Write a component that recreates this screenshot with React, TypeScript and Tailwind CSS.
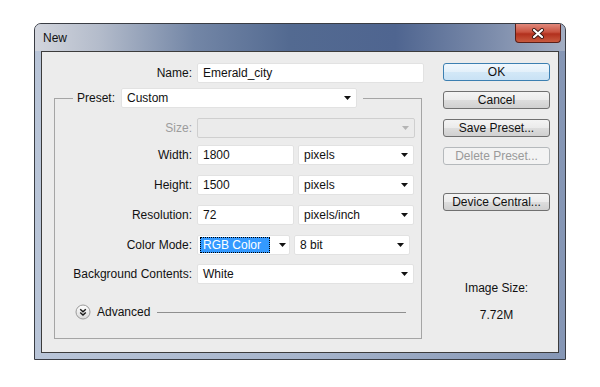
import type { ReactNode } from 'react'

function Arrow({ disabled }: { disabled?: boolean }) {
  return (
    <svg width="7" height="4" viewBox="0 0 7 4" className="shrink-0">
      <polygon points="0,0 7,0 3.5,4" fill={disabled ? '#b4b4b4' : '#111'} />
    </svg>
  )
}

function Field({ width, children }: { width: number; children: ReactNode }) {
  return (
    <div
      className="flex h-[20px] items-center rounded-[2px] border border-[#e2e2e2] bg-white pl-[5px] text-[12px] text-[#111]"
      style={{ width }}
    >
      {children}
    </div>
  )
}

function Select({ width, children }: { width: number; children: ReactNode }) {
  return (
    <div
      className="flex h-[20px] items-center justify-between rounded-[2px] border border-[#e2e2e2] bg-white pr-[5px] pl-[5px] text-[12px] text-[#111]"
      style={{ width }}
    >
      <span>{children}</span>
      <Arrow />
    </div>
  )
}

function Row({ label, top, children, disabled }: { label: string; top: number; children: ReactNode; disabled?: boolean }) {
  return (
    <div className="flex items-center" style={{ marginTop: top }}>
      <span className={`w-[137px] text-right text-[12px] ${disabled ? 'text-[#9c9c9c]' : 'text-[#111]'}`}>{label}</span>
      <div className="ml-[5px] flex items-center gap-[4px]">{children}</div>
    </div>
  )
}

function Button({ children, variant, top }: { children: ReactNode; variant?: 'default' | 'disabled'; top: number }) {
  const styles =
    variant === 'default' ? 'border-[#3c7fb1] bg-[linear-gradient(#f0f7fd,#e3f0fa_50%,#d3e8f7_51%,#c9e2f5)] text-[#111]'
    : variant === 'disabled' ? 'border-[#b5b9bc] bg-[#f3f3f3] text-[#9a9a9a]'
    : 'border-[#707070] bg-[linear-gradient(#f4f4f4,#ebebeb_50%,#dddddd_51%,#d0d0d0)] text-[#111]'
  return (
    <div
      className={`flex h-[18px] w-[107px] items-center justify-center rounded-[3px] border text-[12px] ${styles}`}
      style={{ marginTop: top }}
    >
      {children}
    </div>
  )
}

function AdvancedIcon() {
  return (
    <svg width="16" height="16" viewBox="0 0 16 16" className="shrink-0">
      <defs>
        <linearGradient id="adv" x1="0" y1="0" x2="0" y2="1">
          <stop offset="0" stopColor="#ffffff" />
          <stop offset="1" stopColor="#d9d9d9" />
        </linearGradient>
      </defs>
      <circle cx="8" cy="8" r="7" fill="url(#adv)" stroke="#9a9a9a" />
      <path d="M5.2 5.2 L8 7.8 L10.8 5.2 M5.2 8.4 L8 11 L10.8 8.4" fill="none" stroke="#1a1a1a" strokeWidth="1.4" />
    </svg>
  )
}

function CloseButton() {
  return (
    <div className="mr-[4px] flex h-[19px] w-[46px] items-center justify-center rounded-b-[4px] border border-t-0 border-[#5a1f18] bg-[linear-gradient(#e1897c,#c8523f_45%,#b2301d_55%,#c85a3f)]">
      <svg width="14" height="11" viewBox="0 0 14 11">
        <path d="M3 2 L11 9 M11 2 L3 9" stroke="#3a1a16" strokeWidth="4" strokeLinecap="round" />
        <path d="M3 2 L11 9 M11 2 L3 9" stroke="#ffffff" strokeWidth="2.2" strokeLinecap="round" />
      </svg>
    </div>
  )
}

export default function App() {
  return (
    <div className="h-[387px] w-[600px] bg-white pt-[23px] pl-[34px] font-['Liberation_Sans',Arial,sans-serif]">
      <div className="flex h-[337px] w-[532px] flex-col overflow-hidden rounded-t-[7px] border border-[#3a3d44] bg-[linear-gradient(90deg,#b9c5d8,#a7b5cc_50%,#8596b5)]">
        <div className="flex h-[27px] shrink-0 items-start justify-between bg-[linear-gradient(90deg,#d2d5dd,#b4bccb_12%,#7386a6_30%,#536a91_48%,#4f6590_68%,#7c8cab_86%,#a3aec3)]">
          <span className="self-center pl-[8px] text-[12px] text-[#111]">New</span>
          <CloseButton />
        </div>

        <div className="mx-[6px] mb-[6px] flex flex-1 border border-[#3c3c3c] bg-[#ececec]">
          <div className="w-[401px] shrink-0">
            <div className="mt-[11px] flex items-center">
              <span className="w-[150px] text-right text-[12px] text-[#111]">Name:</span>
              <div className="ml-[5px]">
                <Field width={227}>Emerald_city</Field>
              </div>
            </div>

            <fieldset className="mt-[5px] ml-[12px] w-[368px] border border-[#a5a5a5] pb-[17px]">
              <legend className="ml-[18px] flex items-center pr-[6px] pl-[4px]">
                <span className="mr-[6px] text-[12px] text-[#111]">Preset:</span>
                <Select width={236}>Custom</Select>
              </legend>

              <Row label="Size:" top={10} disabled>
                <div className="flex h-[20px] w-[218px] items-center justify-end rounded-[2px] border border-[#cfcfcf] bg-[#ebebeb] pr-[5px]">
                  <Arrow disabled />
                </div>
              </Row>
              <Row label="Width:" top={7}>
                <Field width={97}>1800</Field>
                <Select width={116}>pixels</Select>
              </Row>
              <Row label="Height:" top={10}>
                <Field width={97}>1500</Field>
                <Select width={116}>pixels</Select>
              </Row>
              <Row label="Resolution:" top={10}>
                <Field width={97}>72</Field>
                <Select width={116}>pixels/inch</Select>
              </Row>
              <Row label="Color Mode:" top={10}>
                <div className="flex h-[20px] w-[93px] items-center justify-between rounded-[2px] border border-[#e2e2e2] bg-white pr-[3px] pl-[2px]">
                  <span className="flex h-[16px] w-[70px] items-center border border-dotted border-black bg-[#3399ff] pl-[2px] text-[12px] text-white">
                    RGB Color
                  </span>
                  <Arrow />
                </div>
                <Select width={116}>8 bit</Select>
              </Row>
              <Row label="Background Contents:" top={9}>
                <Select width={217}>White</Select>
              </Row>

              <div className="mt-[19px] mr-[15px] ml-[20px] flex items-center">
                <AdvancedIcon />
                <span className="ml-[6px] text-[12px] text-[#111]">Advanced</span>
                <div className="ml-[7px] h-px flex-1 bg-[#8f8f8f]" />
              </div>
            </fieldset>
          </div>

          <div className="flex w-[107px] flex-col">
            <Button variant="default" top={11}>
              OK
            </Button>
            <Button top={10}>Cancel</Button>
            <Button top={10}>Save Preset...</Button>
            <Button variant="disabled" top={10}>
              Delete Preset...
            </Button>
            <Button top={28}>Device Central...</Button>
            <div className="mt-[68px] text-center text-[12px] text-[#111]">Image Size:</div>
            <div className="mt-[9px] text-center text-[12px] text-[#111]">7.72M</div>
          </div>
        </div>
      </div>
    </div>
  )
}
